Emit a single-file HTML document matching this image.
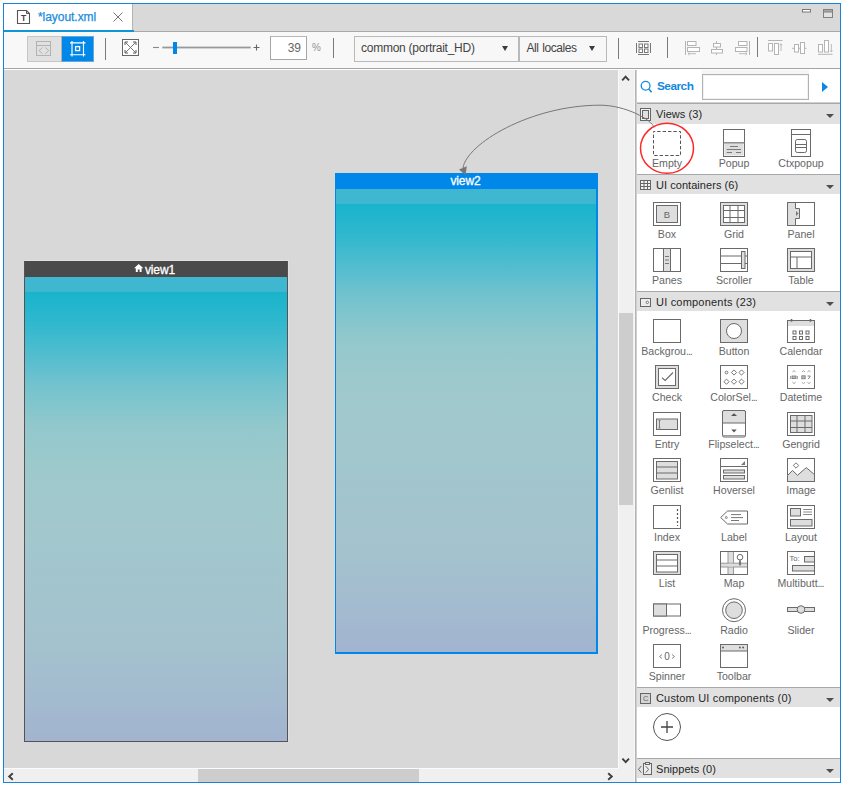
<!DOCTYPE html>
<html lang="en"><head><meta charset="utf-8"><title>layout.xml</title>
<style>
*{box-sizing:border-box;margin:0;padding:0}
html,body{width:843px;height:785px;background:#fff;overflow:hidden}
body{position:relative;font-family:"Liberation Sans",sans-serif;font-size:12px;color:#333}
.abs{position:absolute}
#frame{position:absolute;left:3px;top:3px;width:838px;height:780px;border:1px solid #1883d7;background:#fff}
#tabbar{position:absolute;left:4px;top:4px;width:836px;height:27px;background:#d9d9d9}
#tabline{position:absolute;left:4px;top:31px;width:836px;height:1px;background:#a9a9a9}
#tab{position:absolute;left:4px;top:4px;width:129px;height:26px;background:#fff;border-right:1px solid #b4b4b4}
#tabul{position:absolute;left:4px;top:30px;width:130px;height:2px;background:#0f93d9}
#tabtxt{position:absolute;left:38px;top:10px;font-size:12px;line-height:15px;color:#1a8ddc;letter-spacing:-0.05px;white-space:nowrap;-webkit-text-stroke:0.25px #1a8ddc}
#toolbar{position:absolute;left:4px;top:32px;width:836px;height:36px;background:#f8f8f8}
#tbline{position:absolute;left:4px;top:68px;width:836px;height:1px;background:#a5a5a5}
#tbline2{position:absolute;left:4px;top:69px;width:836px;height:1px;background:#fdfdfd}
.vsep{position:absolute;width:1px;background:#7a7a7a}
#toggle{position:absolute;left:27px;top:36px;width:67px;height:26px;border:1px solid #c6c6c6;background:#e1e1e1}
#toggleon{position:absolute;left:61px;top:36px;width:33px;height:26px;background:#0087ea;border:1px solid #6aa6d8;border-left:1px solid #b8b0a8}
#zoombox{position:absolute;left:270px;top:36px;width:37px;height:24px;border:1px solid #a6a6a6;border-top-color:#b8b8b8;background:#fff;font-size:12px;line-height:23px;text-align:right;padding-right:5px;color:#666}
#pct{position:absolute;left:311.5px;top:40.3px;font-size:11.5px;line-height:15px;color:#929292;transform:scaleX(.86);transform-origin:0 0}
#dd1{position:absolute;left:354px;top:36px;width:165px;height:26px;border:1px solid #b9b9b9;background:#f7f7f7}
#dd2{position:absolute;left:519px;top:36px;width:88px;height:26px;border:1px solid #b9b9b9;background:#f7f7f7}
.ddt{position:absolute;top:3.5px;font-size:12px;line-height:15px;color:#444;white-space:nowrap}
#canvas{position:absolute;left:4px;top:70px;width:615px;height:699px;background:#d8d8d8;overflow:hidden;border-right:1px solid #fbfbfb;border-bottom:1px solid #fbfbfb}
#vscroll{position:absolute;left:618px;top:70px;width:17px;height:712px;background:#f0f0f0;border-right:1px solid #f8f8f8}
#vthumb{position:absolute;left:619px;top:313px;width:14px;height:192px;background:#cdcdcd}
#hscroll{position:absolute;left:4px;top:768px;width:614px;height:14px;background:#f0f0f0}
#hthumb{position:absolute;left:198px;top:769px;width:221px;height:13px;background:#cdcdcd}
#pline{position:absolute;left:635px;top:70px;width:2px;height:712px;background:linear-gradient(90deg,#b4b4b4 50%,#cfcfcf 50%)}
#panel{position:absolute;left:637px;top:70px;width:203px;height:712px;background:#fff}
.view{position:absolute}
.vt{position:absolute;left:0;top:0;width:100%;height:16px;color:#fff;font-size:12px;line-height:16px;text-align:center;white-space:nowrap}
.vband{position:absolute;left:0;top:16px;width:100%;height:15px;background:#3fb7d0}
.vgrad{position:absolute;left:0;top:31px;width:100%;bottom:0;background:linear-gradient(180deg,#18b4cc 0%,#30b8ce 7%,#52bdcf 14%,#74c3ce 21%,#92c8cc 30%,#9ec9cc 40%,#a2c7cd 55%,#a4c2ce 78%,#a3bbcf 90%,#a2b4d0 100%)}
.hdr{position:absolute;left:637px;width:203px;background:#e1e1e1}
.hline{position:absolute;left:637px;width:203px;height:1px;background:#a8a8a8}
.hdrt{position:absolute;left:656px;font-size:11px;line-height:14px;color:#262626;white-space:nowrap;letter-spacing:0.05px}
.tri{position:absolute;width:0;height:0;border-left:4.3px solid transparent;border-right:4.3px solid transparent;border-top:4.8px solid #4e4e4e}
.lbl{position:absolute;width:80px;text-align:center;font-size:10.6px;line-height:13px;color:#666;white-space:nowrap}
.el{letter-spacing:-1px;margin-right:1px}
.ic{position:absolute;overflow:visible}
#search{position:absolute;left:657px;top:79px;font-size:11.8px;line-height:15px;font-weight:bold;color:#1389e0;letter-spacing:-0.5px}
#sinput{position:absolute;left:702px;top:74px;width:107px;height:26px;border:1px solid #b2b2b2;background:#fff;box-shadow:inset 0 0 0 1px #f2f2f2}
svg{position:absolute;overflow:visible}
</style></head>
<body>
<div id="frame"></div>
<div id="tabbar"></div><div id="tabline"></div>
<div id="tab"></div><div id="tabul"></div>
<svg style="left:17px;top:10px" width="14" height="15" viewBox="0 0 14 15"><path d="M.5 .5H9.5L12.5 3.5V13.5H.5Z" fill="#fff" stroke="#555" stroke-width="1.1" /><path d="M9.5 .5V3.5H12.5" fill="none" stroke="#555" stroke-width="1" /><text x="6.5" y="11.2" text-anchor="middle" font-size="8.5" font-weight="bold" fill="#444" font-family="Liberation Sans, sans-serif">T</text></svg>
<div id="tabtxt">*layout.xml</div>
<svg style="left:113px;top:12px" width="10" height="10" viewBox="0 0 10 10"><path d="M.5 .5L9.5 9.5M9.5 .5L.5 9.5" fill="none" stroke="#777" stroke-width="1" /></svg>
<svg style="left:800px;top:6px" width="36" height="14" viewBox="0 0 36 14"><rect x="2.5" y="3.5" width="8" height="2.5" fill="#fff" stroke="#777" /><rect x="23.5" y="3.5" width="9" height="8" fill="#e2e2e2" stroke="#808080" /><rect x="23.5" y="3.5" width="9" height="2.5" fill="#a8a8a8" stroke="#808080" /></svg>
<div id="toolbar"></div><div id="tbline"></div><div id="tbline2"></div>
<div id="toggle"></div><div id="toggleon"></div>
<svg style="left:27px;top:36px" width="68" height="26" viewBox="0 0 68 26"><rect x="9.5" y="5.5" width="14" height="14" fill="none" stroke="#b2b2b2" /><path d="M9.5 9.5H23.5M15.5 11.5L12 14.6L15.5 17.7M18.3 11.5L21.8 14.6L18.3 17.7" fill="none" stroke="#b2b2b2" stroke-width="1" /><path d="M45 5V20.5M56.5 5V20.5M43 6.8H58.5M43 18.7H58.5" fill="none" stroke="#fff" stroke-width="1.15" /><rect x="48.6" y="10.6" width="4" height="4" fill="none" stroke="#fff" stroke-width="1.3"/></svg>
<div class="vsep" style="left:105px;top:38px;height:22px"></div>
<svg style="left:122px;top:39px" width="18" height="18" viewBox="0 0 18 18"><rect x="0.5" y="0.5" width="16" height="16" fill="#fff" stroke="#666" /><path d="M3.5 3.5L13.5 13.5M13.5 3.5L3.5 13.5" fill="none" stroke="#666" stroke-width="0.9" /><path d="M3 6V3H6M11 3H14V6M14 11V14H11M6 14H3V11" fill="none" stroke="#555" stroke-width="1" /></svg>
<svg style="left:150px;top:38px" width="112" height="20" viewBox="0 0 112 20"><path d="M3 9.5H9" fill="none" stroke="#888" stroke-width="1.1" /><rect x="12.3" y="8.6" width="88.4" height="1.8" fill="#999" stroke="none" /><rect x="23" y="4" width="4" height="12" fill="#0087ea" stroke="none" /><path d="M103.5 9.5H109.5M106.5 6.5V12.5" fill="none" stroke="#666" stroke-width="1.1" /></svg>
<div id="zoombox">39</div><div id="pct">%</div>
<div class="vsep" style="left:333px;top:38px;height:20px"></div>
<div id="dd1"><span class="ddt" style="left:6px;letter-spacing:-0.25px">common (portrait_HD)</span></div>
<div id="dd2"><span class="ddt" style="left:6.5px;letter-spacing:-0.45px;word-spacing:1px">All locales</span></div>
<div class="tri" style="left:501.5px;top:45.5px;border-left-width:3.9px;border-right-width:3.9px;border-top:5.8px solid #3c3c3c"></div>
<div class="tri" style="left:589.3px;top:45.5px;border-left-width:3.9px;border-right-width:3.9px;border-top:5.8px solid #3c3c3c"></div>
<div class="vsep" style="left:618px;top:38px;height:21px"></div>
<svg style="left:636px;top:41px" width="16" height="15" viewBox="0 0 16 15"><path d="M2 .5H13M2 13.5H13M.5 2V12M14.5 2V12" fill="none" stroke="#777" stroke-width="1" /><rect x="3" y="3" width="3.5" height="3.5" fill="#fff" stroke="#777" /><rect x="8.5" y="3" width="3.5" height="3.5" fill="#fff" stroke="#777" /><rect x="3" y="8" width="3.5" height="3.5" fill="#fff" stroke="#777" /><rect x="8.5" y="8" width="3.5" height="3.5" fill="#fff" stroke="#777" /></svg><svg style="left:684px;top:41px" width="17" height="15" viewBox="0 0 17 15"><path d="M1.5 0V14" fill="none" stroke="#b4b4b4" stroke-width="1" /><rect x="3.5" y="0.5" width="8.5" height="4" fill="#fff" stroke="#b4b4b4" /><rect x="3.5" y="6.5" width="12" height="4" fill="#fff" stroke="#b4b4b4" /><path d="M4 12.7H12M5.5 11.3L4 12.7L5.5 14.1" fill="none" stroke="#b4b4b4" stroke-width="0.9" /></svg><svg style="left:710px;top:41px" width="15" height="15" viewBox="0 0 15 15"><path d="M6.5 0V14" fill="none" stroke="#b4b4b4" stroke-width="1" /><rect x="3.5" y="2.5" width="7" height="3.5" fill="#fff" stroke="#b4b4b4" /><rect x="1.5" y="8.5" width="11" height="3.5" fill="#fff" stroke="#b4b4b4" /></svg><svg style="left:734px;top:41px" width="17" height="15" viewBox="0 0 17 15"><path d="M15.5 0V14" fill="none" stroke="#b4b4b4" stroke-width="1" /><rect x="4.5" y="0.5" width="8.5" height="4" fill="#fff" stroke="#b4b4b4" /><rect x="1.5" y="6.5" width="11.5" height="4" fill="#fff" stroke="#b4b4b4" /><path d="M5 12.7H13M11.5 11.3L13 12.7L11.5 14.1" fill="none" stroke="#b4b4b4" stroke-width="0.9" /></svg><svg style="left:768px;top:40px" width="16" height="16" viewBox="0 0 16 16"><path d="M0 .5H14.5" fill="none" stroke="#b4b4b4" stroke-width="1" /><rect x="0.5" y="3.5" width="4" height="7.5" fill="#fff" stroke="#b4b4b4" /><rect x="6.5" y="3.5" width="4" height="11" fill="#fff" stroke="#b4b4b4" /><path d="M13 3.8V11M11.7 5.2L13 3.8L14.3 5.2" fill="none" stroke="#b4b4b4" stroke-width="0.9" /></svg><svg style="left:792px;top:41px" width="16" height="14" viewBox="0 0 16 14"><path d="M0 7.3H14.5" fill="none" stroke="#b4b4b4" stroke-width="1" /><rect x="2.5" y="3.5" width="4" height="7.5" fill="#fff" stroke="#b4b4b4" /><rect x="8.5" y="1.5" width="4" height="11" fill="#fff" stroke="#b4b4b4" /></svg><svg style="left:818px;top:40px" width="16" height="16" viewBox="0 0 16 16"><path d="M0 14.3H14.5" fill="none" stroke="#b4b4b4" stroke-width="1" /><rect x="0.5" y="4.5" width="4" height="7.5" fill="#fff" stroke="#b4b4b4" /><rect x="6.5" y="0.5" width="4" height="11.5" fill="#fff" stroke="#b4b4b4" /><path d="M13.3 4V12M12 10.6L13.3 12L14.6 10.6" fill="none" stroke="#b4b4b4" stroke-width="0.9" /></svg>
<div class="vsep" style="left:667px;top:37px;height:21px"></div>
<div class="vsep" style="left:757px;top:37px;height:20px"></div>
<div id="vscroll"></div><div id="hscroll"></div>
<div id="canvas"></div>
<div class="view" style="left:24px;top:261px;width:264px;height:481px;background:#5a5252;box-shadow:1px -1px 0 #e0e0e0"><div class="abs" style="left:1px;top:0;right:1px;bottom:1px;overflow:hidden"><div class="vt" style="background:#4a4a4a"></div><div class="vband"></div><div class="vgrad"></div></div></div>
<svg style="left:134px;top:264px" width="10" height="9" viewBox="0 0 10 9"><path d="M0 4.2L4.7 0L9.4 4.2H7.6V8H5.6V5.4H3.8V8H1.8V4.2Z" fill="#fff" stroke="none" stroke-width="1" /></svg>
<div class="abs" style="left:145px;top:262.7px;font-size:12px;line-height:15px;color:#fff;white-space:nowrap;letter-spacing:-0.15px;-webkit-text-stroke:0.3px #fff">view1</div>
<div class="view" style="left:335px;top:173px;width:263px;height:481px;background:#0087ea"><div class="abs" style="left:1px;top:0;right:2px;bottom:2px;overflow:hidden"><div class="vt" style="background:#0087ea"></div><div class="vband"></div><div class="vgrad"></div></div></div>
<div class="abs" style="left:450.5px;top:174px;font-size:12px;line-height:15px;color:#fff;white-space:nowrap;letter-spacing:-0.15px;-webkit-text-stroke:0.3px #fff">view2</div>
<div id="vthumb"></div><div id="hthumb"></div>
<svg style="left:621px;top:74px" width="10" height="8" viewBox="0 0 10 8"><path d="M1.2 6.4L4.6 2.6L8 6.4" fill="none" stroke="#3f3f3f" stroke-width="1.9" /></svg><svg style="left:621px;top:757px" width="10" height="8" viewBox="0 0 10 8"><path d="M1.4 1.6L4.7 5.2L8 1.6" fill="none" stroke="#3f3f3f" stroke-width="1.9" /></svg><svg style="left:7px;top:772px" width="8" height="9" viewBox="0 0 8 9"><path d="M5.8 1.2L2.2 4.5L5.8 7.8" fill="none" stroke="#3f3f3f" stroke-width="1.9" /></svg><svg style="left:606px;top:772px" width="8" height="9" viewBox="0 0 8 9"><path d="M2.2 1.2L5.8 4.5L2.2 7.8" fill="none" stroke="#3f3f3f" stroke-width="1.9" /></svg>
<div id="pline"></div><div id="panel"></div>
<svg style="left:640px;top:80px" width="14" height="14" viewBox="0 0 14 14"><circle cx="5.6" cy="5.8" r="4.4" fill="none" stroke="#1389e0" stroke-width="1.3"/><path d="M8.8 9L11.6 12.3" fill="none" stroke="#1389e0" stroke-width="1.6" /></svg>
<div class="abs" style="left:702px;top:70px;width:107px;height:4px;background:#f5f5f5"></div>
<div id="search">Search</div><div id="sinput"></div>
<div class="abs" style="left:822px;top:82px;width:0;height:0;border-top:5.5px solid transparent;border-bottom:5.5px solid transparent;border-left:6.5px solid #0d86e8"></div>
<div class="hline" style="top:103px"></div><div class="hdr" style="top:104px;height:20px"></div>
<svg style="left:640px;top:108px" width="12" height="14" viewBox="0 0 12 14"><rect x="0.5" y="0.5" width="10" height="12" fill="#f4f4f4" stroke="#666" /><rect x="2.5" y="2.5" width="6" height="8" fill="#e1e1e1" stroke="#666" /></svg>
<div class="hdrt" style="top:107px;letter-spacing:0.05px">Views (3)</div>
<div class="tri" style="left:826px;top:113.5px"></div>
<div class="hline" style="top:174px"></div><div class="hdr" style="top:175px;height:19px"></div>
<svg style="left:640px;top:180px" width="12" height="11" viewBox="0 0 12 11"><rect x="0.5" y="0.5" width="10" height="9" fill="#f4f4f4" stroke="#666" /><path d="M4 .5V9.5M7.5 .5V9.5M.5 3.5H10.5M.5 6.5H10.5" fill="none" stroke="#666" stroke-width="1" /></svg>
<div class="hdrt" style="top:178px;letter-spacing:0.05px">UI containers (6)</div>
<div class="tri" style="left:826px;top:184.5px"></div>
<div class="hline" style="top:291px"></div><div class="hdr" style="top:292px;height:19px"></div>
<svg style="left:640px;top:298px" width="12" height="10" viewBox="0 0 12 10"><rect x="0.5" y="0.5" width="10" height="8" fill="#ececec" stroke="#666" /><circle cx="7.3" cy="4.4" r="1.2" fill="#fff" stroke="#666" stroke-width=".9"/></svg>
<div class="hdrt" style="top:295px;letter-spacing:0.2px">UI components (23)</div>
<div class="tri" style="left:826px;top:301.5px"></div>
<div class="hline" style="top:687px"></div><div class="hdr" style="top:688px;height:19px"></div>
<svg style="left:640px;top:693px" width="12" height="12" viewBox="0 0 12 12"><rect x="0.5" y="0.5" width="10" height="10" fill="#d4d4d4" stroke="#666" /><text x="5.6" y="8.3" text-anchor="middle" font-size="7.5" fill="#666" font-family="Liberation Sans, sans-serif">C</text></svg>
<div class="hdrt" style="top:691px;letter-spacing:0.17px">Custom UI components (0)</div>
<div class="tri" style="left:826px;top:697.5px"></div>
<div class="hline" style="top:758px"></div><div class="hdr" style="top:759px;height:19px"></div>
<svg style="left:637px;top:762px" width="16" height="14" viewBox="0 0 16 14"><path d="M4.3 4L1.5 7.3L4.3 10.6" fill="none" stroke="#666" stroke-width="1" /><rect x="6.5" y="1.5" width="8" height="11" fill="#ececec" stroke="#666" /><rect x="8.5" y="0.5" width="4" height="2" fill="#ececec" stroke="#666" /><path d="M8.8 4.2L11.6 7.4L8.8 10.6" fill="none" stroke="#666" stroke-width="1" /></svg>
<div class="hdrt" style="top:762px;letter-spacing:0.05px">Snippets (0)</div>
<div class="tri" style="left:826px;top:768.5px"></div>
<div class="hline" style="top:102px;background:#d0d0d0"></div>
<svg class="ic" style="left:653px;top:129.0px" width="28" height="28" viewBox="0 0 28 28" ><rect x=".5" y="2.5" width="27" height="24" fill="#fff" stroke="#555" stroke-dasharray="3.4 2" stroke-dashoffset="1.7"/></svg>
<div class="lbl" style="left:627px;top:157.0px">Empty</div>
<svg class="ic" style="left:720px;top:129.0px" width="28" height="28" viewBox="0 0 28 28" ><rect x="3.5" y="0.5" width="21" height="27" fill="#fff" stroke="#6a6a6a" /><rect x="4.5" y="14.5" width="19" height="12" fill="#dedede" stroke="none" /><path d="M3.5 13.8H24.5" fill="none" stroke="#8a8a8a" stroke-width="1.5" /><path d="M10 17.5H18M6.7 20.5H21M6.7 23.5H12M16 23.5H21" fill="none" stroke="#7a7a7a" stroke-width="1" /></svg>
<div class="lbl" style="left:694px;top:157.0px">Popup</div>
<svg class="ic" style="left:787px;top:129.0px" width="28" height="28" viewBox="0 0 28 28" ><rect x="4.5" y="0.5" width="19" height="27" fill="#fff" stroke="#6a6a6a" /><path d="M4.5 5.5H23.5" fill="none" stroke="#6a6a6a" stroke-width="1" /><rect x="8.5" y="10.5" width="11" height="13" fill="#fff" stroke="#6a6a6a" rx="1.8"/><path d="M8.5 15.5H19.5M8.5 18.5H19.5" fill="none" stroke="#6a6a6a" stroke-width="1" /></svg>
<div class="lbl" style="left:761px;top:157.0px">Ctxpopup</div>
<svg class="ic" style="left:653px;top:202.0px" width="28" height="28" viewBox="0 0 28 28" ><rect x=".5" y=".5" width="27" height="23" fill="#fff" stroke="#6a6a6a"/><rect x="3.5" y="3.5" width="21" height="17" fill="#dedede" stroke="#6a6a6a" /><text x="14" y="15.5" text-anchor="middle" font-size="9.5" fill="#666" font-family="Liberation Sans, sans-serif">B</text></svg>
<div class="lbl" style="left:627px;top:227.5px">Box</div>
<svg class="ic" style="left:720px;top:202.0px" width="28" height="28" viewBox="0 0 28 28" ><rect x=".5" y=".5" width="27" height="23" fill="#dedede" stroke="#6a6a6a"/><rect x="3.5" y="3.5" width="21" height="17" fill="#fff" stroke="#6a6a6a" /><path d="M10 3.5V20.5M18 3.5V20.5M3.5 8.5H24.5M3.5 15.5H24.5" fill="none" stroke="#6a6a6a" stroke-width="1" /></svg>
<div class="lbl" style="left:694px;top:227.5px">Grid</div>
<svg class="ic" style="left:787px;top:202.0px" width="28" height="28" viewBox="0 0 28 28" ><rect x=".5" y=".5" width="27" height="23" fill="#fff" stroke="#6a6a6a"/><path d="M.5 .5H8.5V6.5H12.5V16.5H8.5V23.5H.5Z" fill="#dedede" stroke="#6a6a6a" stroke-width="1" /><path d="M9 9L11.5 11.5L9 14Z" fill="#777" stroke="none" stroke-width="1" /></svg>
<div class="lbl" style="left:761px;top:227.5px">Panel</div>
<svg class="ic" style="left:653px;top:248.0px" width="28" height="28" viewBox="0 0 28 28" ><rect x=".5" y=".5" width="27" height="23" fill="#fff" stroke="#6a6a6a"/><rect x="10.5" y="0.5" width="7" height="23" fill="#dedede" stroke="#6a6a6a" /><path d="M12 8.5H16M12 12H16M12 15.5H16" fill="none" stroke="#777" stroke-width="1" /></svg>
<div class="lbl" style="left:627px;top:273.5px">Panes</div>
<svg class="ic" style="left:720px;top:248.0px" width="28" height="28" viewBox="0 0 28 28" ><rect x=".5" y=".5" width="27" height="23" fill="#fff" stroke="#6a6a6a"/><path d="M.5 8H27.5M.5 15.5H27.5" fill="none" stroke="#6a6a6a" stroke-width="1" /><rect x="21.5" y="3.5" width="3.5" height="17" fill="#dedede" stroke="#6a6a6a" /></svg>
<div class="lbl" style="left:694px;top:273.5px">Scroller</div>
<svg class="ic" style="left:787px;top:248.0px" width="28" height="28" viewBox="0 0 28 28" ><rect x=".5" y=".5" width="27" height="23" fill="#dedede" stroke="#6a6a6a"/><rect x="3.5" y="3.5" width="21" height="17" fill="#fff" stroke="#6a6a6a" /><path d="M3.5 9H24.5M10 9V20.5" fill="none" stroke="#6a6a6a" stroke-width="1" /></svg>
<div class="lbl" style="left:761px;top:273.5px">Table</div>
<svg class="ic" style="left:653px;top:319.0px" width="28" height="28" viewBox="0 0 28 28" ><rect x=".5" y=".5" width="27" height="23" fill="#fff" stroke="#6a6a6a"/></svg>
<div class="lbl" style="left:627px;top:344.5px">Backgrou<span class="el">...</span></div>
<svg class="ic" style="left:720px;top:319.0px" width="28" height="28" viewBox="0 0 28 28" ><rect x=".5" y=".5" width="27" height="23" fill="#dedede" stroke="#6a6a6a"/><circle cx="14" cy="12" r="7.5" fill="#fff" stroke="#6a6a6a"/></svg>
<div class="lbl" style="left:694px;top:344.5px">Button</div>
<svg class="ic" style="left:787px;top:319.0px" width="28" height="28" viewBox="0 0 28 28" ><rect x="0.5" y="1.5" width="27" height="22" fill="#fff" stroke="#6a6a6a" /><rect x="0.5" y="1.5" width="27" height="5.5" fill="#dedede" stroke="none" /><rect x="0.5" y="1.5" width="27" height="22" fill="none" stroke="#6a6a6a" /><path d="M4.5 0V2.8M23.5 0V2.8" fill="none" stroke="#6a6a6a" stroke-width="1.6" /><rect x="6.0" y="12.0" width="3" height="3" fill="#fff" stroke="#6a6a6a" /><rect x="6.0" y="17.5" width="3" height="3" fill="#fff" stroke="#6a6a6a" /><rect x="12.5" y="12.0" width="3" height="3" fill="#fff" stroke="#6a6a6a" /><rect x="12.5" y="17.5" width="3" height="3" fill="#fff" stroke="#6a6a6a" /><rect x="19.0" y="12.0" width="3" height="3" fill="#fff" stroke="#6a6a6a" /><rect x="19.0" y="17.5" width="3" height="3" fill="#fff" stroke="#6a6a6a" /></svg>
<div class="lbl" style="left:761px;top:344.5px">Calendar</div>
<svg class="ic" style="left:653px;top:365.0px" width="28" height="28" viewBox="0 0 28 28" ><rect x="2.5" y="0.5" width="23" height="23" fill="#dedede" stroke="#6a6a6a" /><rect x="5.5" y="3.5" width="17" height="17" fill="#fff" stroke="#6a6a6a" /><path d="M9 12.8L12.2 15.4L20 7.5" fill="none" stroke="#6a6a6a" stroke-width="1.1" /></svg>
<div class="lbl" style="left:627px;top:390.5px">Check</div>
<svg class="ic" style="left:720px;top:365.0px" width="28" height="28" viewBox="0 0 28 28" ><rect x=".5" y=".5" width="27" height="23" fill="#fff" stroke="#6a6a6a"/><circle cx="6.5" cy="7.5" r="1.4" fill="#fff" stroke="#6a6a6a" stroke-width=".9"/><path d="M3.9 16.7L6.5 14.1L9.1 16.7L6.5 19.3Z" fill="#fff" stroke="#6a6a6a" stroke-width="0.9" /><path d="M11.4 7.5L14 4.9L16.6 7.5L14 10.1Z" fill="#fff" stroke="#6a6a6a" stroke-width="0.9" /><path d="M11.4 16.7L14 14.1L16.6 16.7L14 19.3Z" fill="#fff" stroke="#6a6a6a" stroke-width="0.9" /><path d="M18.9 7.5L21.5 4.9L24.1 7.5L21.5 10.1Z" fill="#fff" stroke="#6a6a6a" stroke-width="0.9" /><path d="M18.9 16.7L21.5 14.1L24.1 16.7L21.5 19.3Z" fill="#fff" stroke="#6a6a6a" stroke-width="0.9" /></svg>
<div class="lbl" style="left:694px;top:390.5px">ColorSel<span class="el">...</span></div>
<svg class="ic" style="left:787px;top:365.0px" width="28" height="28" viewBox="0 0 28 28" ><rect x=".5" y=".5" width="27" height="23" fill="#fff" stroke="#6a6a6a"/><path d="M5.4 7L7 5.6L8.6 7" fill="none" stroke="#999" stroke-width="0.9" /><path d="M5.4 17.2L7 18.6L8.6 17.2" fill="none" stroke="#999" stroke-width="0.9" /><path d="M14.9 7L16.5 5.6L18.1 7" fill="none" stroke="#999" stroke-width="0.9" /><path d="M14.9 17.2L16.5 18.6L18.1 17.2" fill="none" stroke="#999" stroke-width="0.9" /><path d="M20.4 7L22 5.6L23.6 7" fill="none" stroke="#999" stroke-width="0.9" /><path d="M20.4 17.2L22 18.6L23.6 17.2" fill="none" stroke="#999" stroke-width="0.9" /><rect x="5" y="11" width="4" height="2.6" fill="#bbb" stroke="#777" stroke-width=".8"/><path d="M3.6 11V14M10.4 11V14" fill="none" stroke="#888" stroke-width="0.8" /><rect x="14.8" y="10.8" width="3.4" height="3" fill="#bbb" stroke="#777" stroke-width=".8"/><path d="M20.5 11H23.3L21.3 14" fill="none" stroke="#777" stroke-width="0.9" /></svg>
<div class="lbl" style="left:761px;top:390.5px">Datetime</div>
<svg class="ic" style="left:653px;top:412.0px" width="28" height="28" viewBox="0 0 28 28" ><rect x=".5" y=".5" width="27" height="23" fill="#fff" stroke="#6a6a6a"/><rect x="3.5" y="7" width="21" height="10.5" fill="#dedede" stroke="#6a6a6a" /><path d="M5.5 8.5H7.5M5.5 16H7.5M6.5 8.5V16" fill="none" stroke="#777" stroke-width="0.9" /></svg>
<div class="lbl" style="left:627px;top:437.5px">Entry</div>
<svg class="ic" style="left:720px;top:412.0px" width="28" height="28" viewBox="0 0 28 28" ><rect x="2.5" y="-1.5" width="23" height="26.5" fill="#fff" stroke="#6a6a6a" rx="1.5"/><path d="M2.5 11V0Q2.5 -1.5 4 -1.5H24Q25.5 -1.5 25.5 0V11Z" fill="#dedede" stroke="#6a6a6a" stroke-width="1" /><path d="M2.5 23.7H25.5" fill="none" stroke="#888" stroke-width="1" /><path d="M11 4L14 1.2L17 4Z" fill="#555" stroke="none" stroke-width="1" /><path d="M11.3 17.6L16.7 17.6L14 20.4Z" fill="#555" stroke="none" stroke-width="1" /></svg>
<div class="lbl" style="left:694px;top:437.5px">Flipselect<span class="el">...</span></div>
<svg class="ic" style="left:787px;top:412.0px" width="28" height="28" viewBox="0 0 28 28" ><rect x=".5" y=".5" width="27" height="23" fill="#fff" stroke="#6a6a6a"/><rect x="3.5" y="3.5" width="21.5" height="17" fill="#dedede" stroke="#6a6a6a" /><path d="M10 3.5V20.5M18 3.5V20.5M3.5 9H25M3.5 15.5H25" fill="none" stroke="#6a6a6a" stroke-width="1" /></svg>
<div class="lbl" style="left:761px;top:437.5px">Gengrid</div>
<svg class="ic" style="left:653px;top:458.0px" width="28" height="28" viewBox="0 0 28 28" ><rect x=".5" y=".5" width="27" height="23" fill="#fff" stroke="#6a6a6a"/><rect x="3.5" y="3.5" width="21" height="17.5" fill="#dedede" stroke="#6a6a6a" /><path d="M3.5 9H24.5M3.5 15H24.5" fill="none" stroke="#6a6a6a" stroke-width="1" /></svg>
<div class="lbl" style="left:627px;top:483.5px">Genlist</div>
<svg class="ic" style="left:720px;top:458.0px" width="28" height="28" viewBox="0 0 28 28" ><rect x=".5" y=".5" width="27" height="23" fill="#fff" stroke="#6a6a6a"/><path d="M.5 8.5H27.5" fill="none" stroke="#6a6a6a" stroke-width="1" /><path d="M25 3V7H21Z" fill="#777" stroke="none" stroke-width="1" /><rect x="3.5" y="12" width="21" height="3" fill="#dedede" stroke="#6a6a6a" /><rect x="3.5" y="17.5" width="21" height="3.5" fill="#dedede" stroke="#6a6a6a" /></svg>
<div class="lbl" style="left:694px;top:483.5px">Hoversel</div>
<svg class="ic" style="left:787px;top:458.0px" width="28" height="28" viewBox="0 0 28 28" ><rect x=".5" y=".5" width="27" height="23" fill="#fff" stroke="#6a6a6a"/><path d="M.5 17.5L5.5 12.5L10.5 17.3L19.3 9.6L27.5 16.7V23.5H.5Z" fill="#dedede" stroke="#6a6a6a" stroke-width="1" /><path d="M6.3 7.5L9 4.8L11.7 7.5L9 10.2Z" fill="#fff" stroke="#6a6a6a" stroke-width="0.9" /></svg>
<div class="lbl" style="left:761px;top:483.5px">Image</div>
<svg class="ic" style="left:653px;top:505.0px" width="28" height="28" viewBox="0 0 28 28" ><rect x=".5" y=".5" width="27" height="23" fill="#fff" stroke="#6a6a6a"/><path d="M24.5 4V21" fill="none" stroke="#555" stroke-width="1.2" stroke-dasharray="2 2"/></svg>
<div class="lbl" style="left:627px;top:530.5px">Index</div>
<svg class="ic" style="left:720px;top:505.0px" width="28" height="28" viewBox="0 0 28 28" ><path d="M.7 12.5L7.5 6H27.5V19H7.5Z" fill="#fff" stroke="#6a6a6a" stroke-width="1" /><circle cx="6.3" cy="12.5" r="1" fill="#fff" stroke="#6a6a6a" stroke-width=".8"/><path d="M11 9.6H21M11 12.6H23M11 15.5H19" fill="none" stroke="#777" stroke-width="1" /></svg>
<div class="lbl" style="left:694px;top:530.5px">Label</div>
<svg class="ic" style="left:787px;top:505.0px" width="28" height="28" viewBox="0 0 28 28" ><rect x=".5" y=".5" width="27" height="23" fill="#fff" stroke="#6a6a6a"/><rect x="3.5" y="3.5" width="10" height="7.5" fill="#dedede" stroke="#6a6a6a" /><path d="M16.2 4.5H25M16.2 7H25M16.2 9.5H25" fill="none" stroke="#888" stroke-width="1" /><rect x="3.5" y="14.5" width="21.5" height="6.5" fill="#dedede" stroke="#6a6a6a" /></svg>
<div class="lbl" style="left:761px;top:530.5px">Layout</div>
<svg class="ic" style="left:653px;top:551.0px" width="28" height="28" viewBox="0 0 28 28" ><rect x=".5" y=".5" width="27" height="23" fill="#dedede" stroke="#6a6a6a"/><rect x="3.5" y="3.5" width="21" height="17.5" fill="#fff" stroke="#6a6a6a" /><path d="M3.5 9H24.5M3.5 15H24.5" fill="none" stroke="#6a6a6a" stroke-width="1" /></svg>
<div class="lbl" style="left:627px;top:576.5px">List</div>
<svg class="ic" style="left:720px;top:551.0px" width="28" height="28" viewBox="0 0 28 28" ><rect x=".5" y=".5" width="27" height="23" fill="#fff" stroke="#6a6a6a"/><rect x="8" y="0.5" width="5.5" height="23" fill="#dedede" stroke="#999" /><rect x="0.5" y="12.2" width="27" height="3.8" fill="#dedede" stroke="#999" /><rect x="8.5" y="12.7" width="4.5" height="2.8" fill="#dedede" stroke="none" /><rect x="0.5" y="0.5" width="27" height="23" fill="none" stroke="#6a6a6a" /><circle cx="20" cy="6.2" r="2.8" fill="#fff" stroke="#6a6a6a"/><path d="M20 9V14.5" fill="none" stroke="#6a6a6a" stroke-width="1.4" /><path d="M18.8 11.2H21.2M18.8 13H21.2" fill="none" stroke="#6a6a6a" stroke-width="0.8" /></svg>
<div class="lbl" style="left:694px;top:576.5px">Map</div>
<svg class="ic" style="left:787px;top:551.0px" width="28" height="28" viewBox="0 0 28 28" ><rect x=".5" y=".5" width="27" height="23" fill="#fff" stroke="#6a6a6a"/><text x="2.4" y="10" font-size="7.6" fill="#666" font-family="Liberation Sans, sans-serif">To:</text><rect x="17.5" y="5.5" width="10" height="5.5" fill="#dedede" stroke="#6a6a6a" /><rect x="5.5" y="14.5" width="22" height="5.5" fill="#dedede" stroke="#6a6a6a" /></svg>
<div class="lbl" style="left:761px;top:576.5px">Multibutt<span class="el">...</span></div>
<svg class="ic" style="left:653px;top:598.0px" width="28" height="28" viewBox="0 0 28 28" ><rect x="0.5" y="6" width="27" height="12" fill="#fff" stroke="#6a6a6a" /><rect x="0.5" y="6" width="13" height="12" fill="#dedede" stroke="#6a6a6a" /></svg>
<div class="lbl" style="left:627px;top:623.5px">Progress<span class="el">...</span></div>
<svg class="ic" style="left:720px;top:598.0px" width="28" height="28" viewBox="0 0 28 28" ><circle cx="14" cy="12.2" r="11.5" fill="#fff" stroke="#6a6a6a"/><circle cx="14" cy="12.2" r="8.3" fill="#dedede" stroke="#6a6a6a"/></svg>
<div class="lbl" style="left:694px;top:623.5px">Radio</div>
<svg class="ic" style="left:787px;top:598.0px" width="28" height="28" viewBox="0 0 28 28" ><rect x="0.5" y="9.5" width="27" height="4" fill="#dedede" stroke="#6a6a6a" /><circle cx="14" cy="11.5" r="3.8" fill="#dedede" stroke="#6a6a6a"/></svg>
<div class="lbl" style="left:761px;top:623.5px">Slider</div>
<svg class="ic" style="left:653px;top:644.0px" width="28" height="28" viewBox="0 0 28 28" ><rect x=".5" y=".5" width="27" height="23" fill="#fff" stroke="#6a6a6a"/><path d="M9 10.5L6.5 12.5L9 14.5M19 10.5L21.5 12.5L19 14.5" fill="none" stroke="#888" stroke-width="1" /><text x="14" y="16" text-anchor="middle" font-size="10" fill="#666" font-family="Liberation Sans, sans-serif">0</text></svg>
<div class="lbl" style="left:627px;top:669.5px">Spinner</div>
<svg class="ic" style="left:720px;top:644.0px" width="28" height="28" viewBox="0 0 28 28" ><rect x=".5" y=".5" width="27" height="23" fill="#fff" stroke="#6a6a6a"/><rect x="0.5" y="0.5" width="27" height="6.5" fill="#dedede" stroke="#6a6a6a" /><circle cx="3" cy="3.5" r=".9" fill="#555"/><circle cx="19.9" cy="3.5" r=".9" fill="#555"/><circle cx="23.1" cy="3.5" r=".9" fill="#555"/></svg>
<div class="lbl" style="left:694px;top:669.5px">Toolbar</div>
<svg class="ic" style="left:653px;top:713px" width="28" height="28" viewBox="0 0 28 28" ><circle cx="14" cy="14" r="13.5" fill="#fff" stroke="#555" stroke-width="1"/><path d="M8 14H20M14 8V20" stroke="#444" stroke-width="1.3" fill="none"/></svg>
<svg style="left:0;top:0" width="843" height="785" viewBox="0 0 843 785"><path d="M654 127.3 C 651.7 119.9, 626 105.2, 600 105.2 C 530.6 105.2, 466.4 143.9, 463 168" fill="none" stroke="#777" stroke-width="1"/><path d="M459 169.4 L466.8 166.3 L465.6 175.2 Z" fill="#777"/><ellipse cx="667" cy="148.3" rx="26.5" ry="25" fill="none" stroke="#ff2626" stroke-width="1.5"/></svg>
</body></html>
